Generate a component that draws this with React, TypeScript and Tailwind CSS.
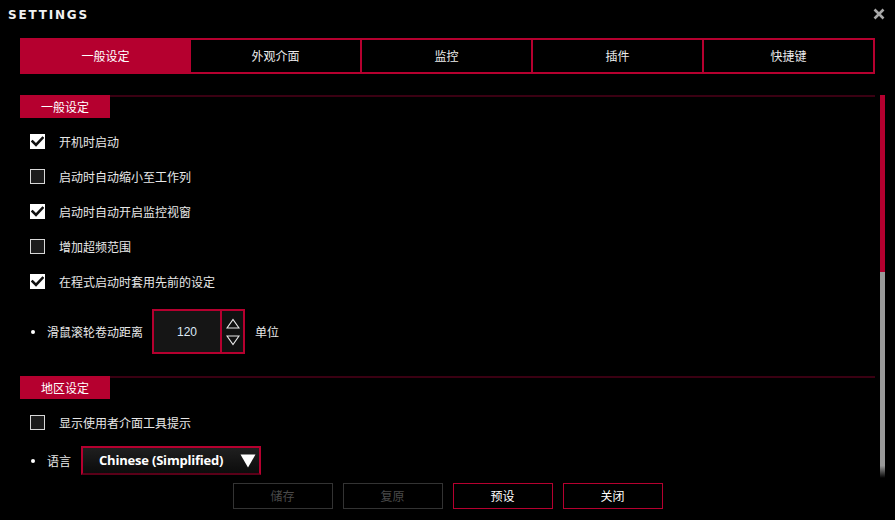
import React from "react";

function Check({ checked }: { checked: boolean }) {
  return checked ? (
    <div className="w-[15px] h-[15px] bg-white flex items-center justify-center">
      <svg width="13" height="11" viewBox="0 0 13 11">
        <path d="M1.5 5.5 L5 9 L11.5 2" stroke="#111" strokeWidth="2.6" fill="none" strokeLinecap="square" />
      </svg>
    </div>
  ) : (
    <div className="w-[15px] h-[15px] bg-[#1c1c1c] border border-[#d8d8d8]" />
  );
}

function CheckRow({ label, checked }: { label: string; checked: boolean }) {
  return (
    <div className="h-[35px] flex items-center pl-[10px] gap-[14px]">
      <Check checked={checked} />
      <span className="text-[12px] text-[#e8e8e8]">{label}</span>
    </div>
  );
}

function SectionHeader({ title }: { title: string }) {
  return (
    <div className="flex items-start">
      <div className="w-[90px] h-[23px] bg-[#b5002f] text-white text-[12px] flex items-center justify-center">
        {title}
      </div>
      <div className="flex-1 h-[2px] bg-[#3a0012]" />
    </div>
  );
}

function Bullet() {
  return <div className="w-[4px] h-[4px] rounded-full bg-white" />;
}

export default function App() {
  const tabs = ["一般设定", "外观介面", "监控", "插件", "快捷键"];
  return (
    <div
      className="w-[895px] h-[520px] bg-black relative overflow-hidden text-white"
      style={{ fontFamily: '"Noto Sans CJK SC", "Noto Sans", sans-serif' }}
    >
      {/* title bar */}
      <div className="h-[38px] flex items-start justify-between pl-[8px] pr-[10px] pt-[6px]">
        <span
          className="text-[12px] font-bold tracking-[1.8px] text-[#f0f0f0]"
          style={{ fontFamily: '"DejaVu Sans", sans-serif' }}
        >
          SETTINGS
        </span>
        <svg width="12" height="12" viewBox="0 0 12 12" className="mt-[2px]">
          <path d="M1.5 1.5 L10.5 10.5 M10.5 1.5 L1.5 10.5" stroke="#a8a8a8" strokeWidth="2.6" />
        </svg>
      </div>

      {/* tabs */}
      <div className="mx-[20px] grid grid-cols-5 h-[36px]">
        {tabs.map((t, i) => (
          <div
            key={t}
            className={
              "flex items-center justify-center text-[12px] border-2 border-[#b5002f] " +
              (i > 0 ? "border-l-0 " : "") +
              (i === 0 ? "bg-[#b5002f] text-white" : "text-[#ececec]")
            }
          >
            {t}
          </div>
        ))}
      </div>

      {/* content */}
      <div className="mt-[21px] flex h-[383px]">
        <div className="ml-[20px] w-[855px] overflow-hidden">
          <SectionHeader title="一般设定" />
          <div className="mt-[6px]">
            <CheckRow label="开机时启动" checked={true} />
            <CheckRow label="启动时自动缩小至工作列" checked={false} />
            <CheckRow label="启动时自动开启监控视窗" checked={true} />
            <CheckRow label="增加超频范围" checked={false} />
            <CheckRow label="在程式启动时套用先前的设定" checked={true} />
          </div>
          <div className="mt-[10px] h-[45px] flex items-center pl-[11px]">
            <Bullet />
            <span className="ml-[12px] text-[12px] text-[#e8e8e8]">滑鼠滚轮卷动距离</span>
            <div className="ml-[9px] flex h-[45px] border-2 border-[#b5002f]">
              <div
                className="w-[66px] bg-[#151515] flex items-center justify-center text-[12px] text-[#dde8f5]"
                style={{ fontFamily: '"Liberation Sans", sans-serif' }}
              >
                120
              </div>
              <div className="w-[23px] border-l-2 border-[#b5002f] bg-[#111] flex flex-col items-center justify-center gap-[6px]">
                <svg width="14" height="11" viewBox="0 0 14 11">
                  <path d="M1 10 L7 1.5 L13 10 Z" stroke="#e8e8e8" strokeWidth="1.2" fill="none" />
                </svg>
                <svg width="14" height="11" viewBox="0 0 14 11">
                  <path d="M1 1 L7 9.5 L13 1 Z" stroke="#e8e8e8" strokeWidth="1.2" fill="none" />
                </svg>
              </div>
            </div>
            <span className="ml-[10px] text-[12px] text-[#e8e8e8]">单位</span>
          </div>

          <div className="mt-[22px]">
            <SectionHeader title="地区设定" />
          </div>
          <div className="mt-[6px]">
            <CheckRow label="显示使用者介面工具提示" checked={false} />
          </div>
          <div className="mt-[6px] h-[29px] flex items-center pl-[11px]">
            <Bullet />
            <span className="ml-[12px] text-[12px] text-[#e8e8e8]">语言</span>
            <div
              className="ml-[10px] w-[180px] h-[29px] border-2 border-[#b5002f] border-b-[#5a0018] flex items-center justify-between pl-[16px] pr-[3px]"
              style={{ background: "linear-gradient(#1f1f1f, #0c0c0c)" }}
            >
              <span
                className="text-[13px] font-bold text-white tracking-[-0.2px]"
                style={{ fontFamily: '"Open Sans", "Noto Sans", sans-serif' }}
              >
                Chinese (Simplified)
              </span>
              <svg width="16" height="14" viewBox="0 0 16 14">
                <path d="M0.5 0.5 L15.5 0.5 L8 13.5 Z" fill="#ffffff" />
              </svg>
            </div>
          </div>
        </div>
        {/* scrollbar */}
        <div className="ml-[5px] w-[5px] flex flex-col">
          <div className="h-[177px] bg-[#b5002f]" />
          <div
            className="flex-1"
            style={{ background: "linear-gradient(#9a9a9a 0%, #9a9a9a 94%, #000 100%)" }}
          />
        </div>
      </div>

      {/* buttons */}
      <div className="mt-[5px] flex justify-center gap-[10px]">
        <div className="w-[100px] h-[26px] border border-[#333] flex items-center justify-center text-[12px] text-[#4a4a4a]">储存</div>
        <div className="w-[100px] h-[26px] border border-[#333] flex items-center justify-center text-[12px] text-[#4a4a4a]">复原</div>
        <div className="w-[100px] h-[26px] border border-[#b5002f] flex items-center justify-center text-[12px] text-white">预设</div>
        <div className="w-[100px] h-[26px] border border-[#b5002f] flex items-center justify-center text-[12px] text-white">关闭</div>
      </div>
    </div>
  );
}
